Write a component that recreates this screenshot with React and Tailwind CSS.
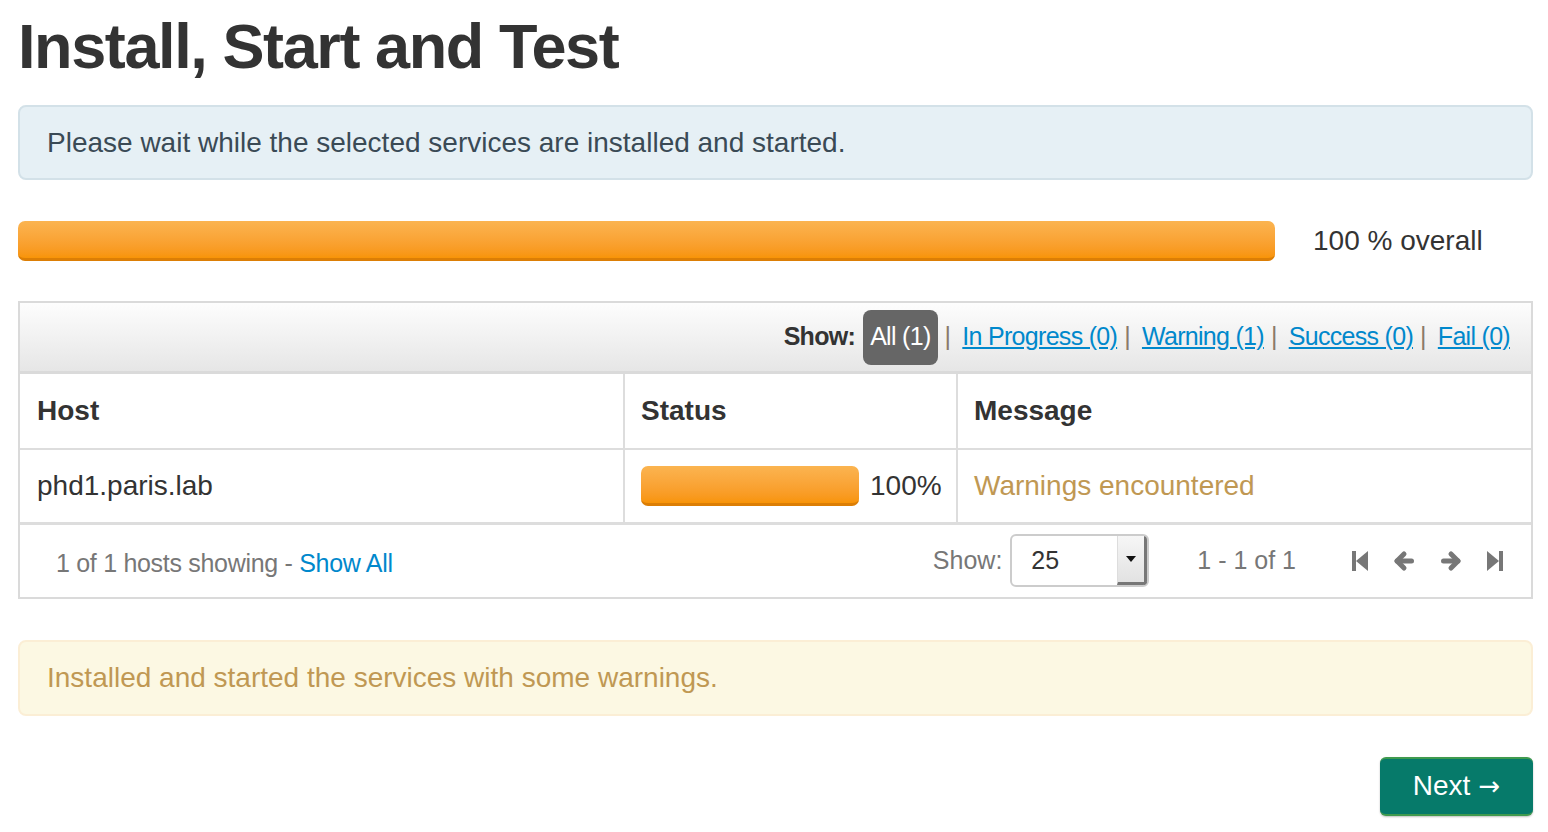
const FONT = "font-['Liberation_Sans','Helvetica_Neue',Arial,sans-serif]";

const FILTERS = [
  { label: "In Progress (0)" },
  { label: "Warning (1)" },
  { label: "Success (0)" },
  { label: "Fail (0)" },
];

// chunky FontAwesome-3 style pager glyphs
function StepBack() {
  return (
    <svg width="16" height="20" viewBox="0 0 16 20" aria-hidden="true">
      <rect x="0" y="0" width="4" height="20" fill="#777" />
      <polygon points="16,0 16,20 4,10" fill="#777" />
    </svg>
  );
}
function StepFwd() {
  return (
    <svg width="16" height="20" viewBox="0 0 16 20" aria-hidden="true">
      <rect x="12" y="0" width="4" height="20" fill="#777" />
      <polygon points="0,0 0,20 12,10" fill="#777" />
    </svg>
  );
}
function Arrow({ dir }) {
  const flip = dir === "right" ? "scale(-1,1) translate(-22,0)" : undefined;
  return (
    <svg width="22" height="22" viewBox="0 0 22 22" aria-hidden="true">
      <g transform={flip} stroke="#777" strokeWidth="5" strokeLinecap="round" strokeLinejoin="round" fill="none">
        <path d="M18.5 11H4" />
        <path d="M11 4L4 11l7 7" />
      </g>
    </svg>
  );
}

function OrangeBar({ className }) {
  return (
    <div
      className={`${className} rounded-[7px] bg-gradient-to-b from-[#fbb450] to-[#f89406] border-b-[3px] border-[#dc7e05]`}
    />
  );
}

export default function App() {
  return (
    <div className={`${FONT} w-[1548px] h-[832px] bg-white text-[#333] pl-[18px] pr-[15px] pt-[15px]`}>
      <h2 className="text-[63px] leading-none font-bold tracking-[-1.4px] text-[#333]">Install, Start and Test</h2>

      <div className="mt-[27px] h-[75px] flex items-center px-[27px] rounded-[8px] border-2 border-[#d3e1e8] bg-[#e6f0f5] text-[28px] text-[#3a4a55]">
        Please wait while the selected services are installed and started.
      </div>

      <div className="mt-[40px] flex items-center">
        <OrangeBar className="w-[1257px] h-[40px]" />
        <span className="ml-[38px] text-[28px] text-[#333]">100 % overall</span>
      </div>

      <div className="mt-[39px] border-2 border-[#dadada]">
        <div className="h-[71px] flex items-center justify-end pr-[21px] bg-gradient-to-b from-[#fdfdfd] to-[#e6e6e6] border-b-[3px] border-[#dadada] text-[25px] tracking-[-0.7px]">
          <span className="font-bold text-[#333] mr-[8px]">Show:</span>
          <span className="h-[55px] px-[7px] flex items-center rounded-[8px] bg-[#666] text-white">All (1)</span>
          {FILTERS.map((f) => (
            <span key={f.label} className="flex items-center">
              <span className="text-[#8a7a6a] ml-[7px] mr-[12px]">|</span>
              <a href="#" className="text-[#0088cc] underline">{f.label}</a>
            </span>
          ))}
        </div>

        <table className="w-full border-collapse text-[28px]">
          <thead>
            <tr className="h-[75px]">
              <th className="w-[604px] text-left font-bold pl-[17px] border-r-2 border-b-2 border-[#ddd]">Host</th>
              <th className="w-[333px] text-left font-bold pl-[16px] border-r-2 border-b-2 border-[#ddd]">Status</th>
              <th className="text-left font-bold pl-[16px] border-b-2 border-[#ddd]">Message</th>
            </tr>
          </thead>
          <tbody>
            <tr className="h-[74px]">
              <td className="pl-[17px] border-r-2 border-b-[3px] border-[#ddd]">phd1.paris.lab</td>
              <td className="pl-[16px] border-r-2 border-b-[3px] border-[#ddd]">
                <div className="flex items-center">
                  <OrangeBar className="w-[218px] h-[40px]" />
                  <span className="ml-[11px]">100%</span>
                </div>
              </td>
              <td className="pl-[16px] text-[#c09853] border-b-[3px] border-[#ddd]">Warnings encountered</td>
            </tr>
          </tbody>
        </table>

        <div className="h-[72px] flex items-center pl-[36px] pr-[28px] text-[25px] text-[#777]">
          <span className="mt-[6px] tracking-[-0.3px]">
            1 of 1 hosts showing - <a href="#" className="text-[#0088cc]">Show All</a>
          </span>
          <span className="ml-auto">Show:</span>
          <div className="ml-[8px] w-[139px] h-[53px] flex rounded-[6px] border-2 border-[#ccc] bg-white overflow-hidden">
            <span className="flex-1 flex items-center pl-[19px] text-[#333]">25</span>
            <span className="w-[30px] flex items-center justify-center bg-gradient-to-b from-[#f6f6f6] to-[#e2e2e2] border-r-[3px] border-b-[3px] border-[#777] border-l border-l-[#ddd]">
              <svg width="10" height="6" viewBox="0 0 10 6"><polygon points="0,0 10,0 5,6" fill="#111" /></svg>
            </span>
          </div>
          <span className="ml-[48px] mr-[56px]">1 - 1 of 1</span>
          <div className="flex items-center gap-[25px]">
            <StepBack />
            <Arrow dir="left" />
            <Arrow dir="right" />
            <StepFwd />
          </div>
        </div>
      </div>

      <div className="mt-[41px] h-[76px] flex items-center px-[27px] rounded-[8px] border-2 border-[#fbeed5] bg-[#fcf8e3] text-[28px] text-[#c09853]">
        Installed and started the services with some warnings.
      </div>

      <div className="mt-[41px] flex justify-end">
        <button className="w-[153px] h-[59px] flex items-center justify-center gap-[8px] rounded-[6px] bg-[#067a6a] border-t-2 border-b-2 border-[#3f9a4e] text-white text-[28px] shadow-[0_1px_2px_rgba(0,0,0,0.25)]">
          <span>Next</span>
          <span className="font-['DejaVu_Sans',sans-serif] text-[26px]">→</span>
        </button>
      </div>
    </div>
  );
}
